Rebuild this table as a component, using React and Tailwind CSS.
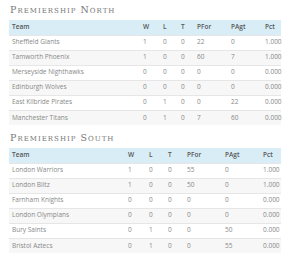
const north = {
  title: "Premiership North",
  cols: [131, 20, 18, 16, 34, 34, 19],
  rows: [
    ["Sheffield Giants", 1, 0, 0, 22, 0, "1.000"],
    ["Tamworth Phoenix", 1, 0, 0, 60, 7, "1.000"],
    ["Merseyside Nighthawks", 0, 0, 0, 0, 0, "0.000"],
    ["Edinburgh Wolves", 0, 0, 0, 0, 0, "0.000"],
    ["East Kilbride Pirates", 0, 1, 0, 0, 22, "0.000"],
    ["Manchester Titans", 0, 1, 0, 7, 60, "0.000"],
  ],
};

const south = {
  title: "Premiership South",
  cols: [116, 21, 19, 19, 38, 38, 21],
  rows: [
    ["London Warriors", 1, 0, 0, 55, 0, "1.000"],
    ["London Blitz", 1, 0, 0, 50, 0, "1.000"],
    ["Farnham Knights", 0, 0, 0, 0, 0, "0.000"],
    ["London Olympians", 0, 0, 0, 0, 0, "0.000"],
    ["Bury Saints", 0, 1, 0, 0, 50, "0.000"],
    ["Bristol Aztecs", 0, 1, 0, 0, 55, "0.000"],
  ],
};

const heads = ["Team", "W", "L", "T", "PFor", "PAgt", "Pct"];

function Standings({ league, first }) {
  return (
    <section className={first ? "" : "mt-[3px]"}>
      <h2 className="h-[20px] flex items-center pl-[1px] text-[9.5px] leading-none font-medium tracking-[1px] text-[#777] [font-variant:small-caps] font-['DejaVu_Serif',serif]">
        {league.title}
      </h2>
      <table className="w-[272px] table-fixed border-collapse text-[6.5px] leading-none">
        <colgroup>
          {league.cols.map((w, i) => (
            <col key={i} style={{ width: w }} />
          ))}
        </colgroup>
        <thead>
          <tr className="h-[15px] bg-[#d9edf7]">
            {heads.map((h) => (
              <th key={h} className="pl-[3px] text-left font-semibold text-[#555]">
                {h}
              </th>
            ))}
          </tr>
        </thead>
        <tbody>
          {league.rows.map((r) => (
            <tr key={r[0]} className="h-[15px] border-t border-[#e6e6e6] even:bg-[#f7f7f7]">
              {r.map((c, i) => (
                <td key={i} className="pl-[3px] text-[#888] whitespace-nowrap">
                  {c}
                </td>
              ))}
            </tr>
          ))}
        </tbody>
      </table>
    </section>
  );
}

export default function App() {
  return (
    <div className="w-[300px] h-[261px] bg-white px-[9px] font-['Open_Sans',sans-serif]">
      <Standings league={north} first />
      <Standings league={south} />
    </div>
  );
}
